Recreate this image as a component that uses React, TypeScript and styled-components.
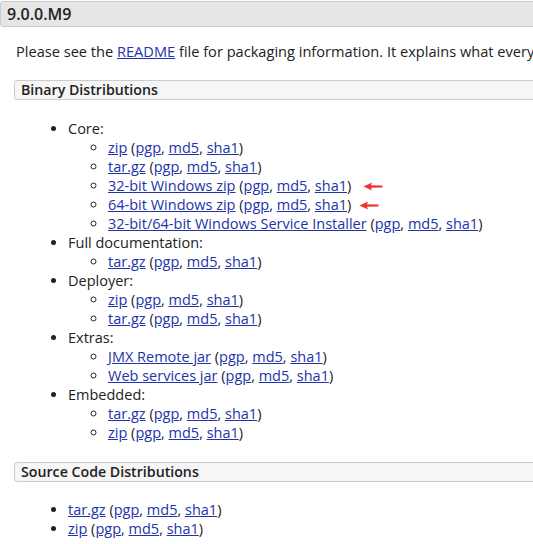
import styled, { createGlobalStyle } from "styled-components";

const GlobalStyle = createGlobalStyle`
    html, body {
        margin: 0;
        padding: 0;
        background: #ffffff;
        overflow: hidden;
    }
    body {
        font-family: "Open Sans", "Noto Sans", sans-serif;
        font-size: 14px;
        color: #222222;
        line-height: 19px;
    }
`;

const Page = styled.div`
    width: 533px;
    height: 544px;
    overflow: hidden;
    padding-top: 1px;
    box-sizing: border-box;
`;

const Release = styled.h2`
    margin: 0 -6px 0 0;
    padding: 2px 6px;
    font-size: 16px;
    font-weight: 600;
    line-height: 20px;
    background: #e6e6e6;
    border: 1px solid #cccccc;
    border-radius: 3px;
`;

const Intro = styled.p`
    margin: 15px 0 0 16px;
    font-size: 14.6px;
    white-space: nowrap;
`;

const SectionTitle = styled.h3<{ $top: number }>`
    margin: ${(p) => p.$top}px -10px 0 14px;
    padding: 0 6px;
    font-size: 14.2px;
    font-weight: 600;
    line-height: 18px;
    background: #f6f6f6;
    border: 1px solid #cccccc;
    border-radius: 3px;
`;

const List = styled.ul<{ $top: number }>`
    margin: ${(p) => p.$top}px 0 0 0;
    padding-left: 68px;
    list-style: disc;
    font-size: 14.5px;
`;

const SubList = styled.ul`
    margin: 0;
    padding-left: 40px;
    list-style: circle;
`;

const Item = styled.li`
    white-space: nowrap;
`;

const A = styled.a`
    color: #2233aa;
    text-decoration: underline;
`;

const Arrow = styled.svg`
    display: inline-block;
    vertical-align: middle;
    margin-top: -2px;
`;

const RedArrow = ({ shift }: { shift: number }) => (
    <Arrow width="20" height="9" viewBox="0 0 20 9" style={{ marginLeft: shift }}>
        <path d="M0.5 4.5 L9 0.5 L8 3.2 L19.5 3.6 L19.5 5.4 L8 5.8 L9 8.5 Z" fill="#ee3333" />
    </Arrow>
);

const Sums = () => (
    <>
        {" ("}
        <A href="#">pgp</A>, <A href="#">md5</A>, <A href="#">sha1</A>)
    </>
);

const Dl = ({ name, arrow }: { name: string; arrow?: number }) => (
    <Item>
        <A href="#">{name}</A>
        <Sums />
        {arrow !== undefined && <RedArrow shift={arrow} />}
    </Item>
);

const App = () => {
    return (
        <Page>
            <GlobalStyle />
            <Release>9.0.0.M9</Release>
            <Intro>
                Please see the <A href="#">README</A> file for packaging information. It
                explains what every distribution contains.
            </Intro>
            <SectionTitle $top={19}>Binary Distributions</SectionTitle>
            <List $top={19}>
                <Item>
                    Core:
                    <SubList>
                        <Dl name="zip" />
                        <Dl name="tar.gz" />
                        <Dl name="32-bit Windows zip" arrow={12} />
                        <Dl name="64-bit Windows zip" arrow={8} />
                        <Dl name="32-bit/64-bit Windows Service Installer" />
                    </SubList>
                </Item>
                <Item>
                    Full documentation:
                    <SubList>
                        <Dl name="tar.gz" />
                    </SubList>
                </Item>
                <Item>
                    Deployer:
                    <SubList>
                        <Dl name="zip" />
                        <Dl name="tar.gz" />
                    </SubList>
                </Item>
                <Item>
                    Extras:
                    <SubList>
                        <Dl name="JMX Remote jar" />
                        <Dl name="Web services jar" />
                    </SubList>
                </Item>
                <Item>
                    Embedded:
                    <SubList>
                        <Dl name="tar.gz" />
                        <Dl name="zip" />
                    </SubList>
                </Item>
            </List>
            <SectionTitle $top={20}>Source Code Distributions</SectionTitle>
            <List $top={18}>
                <Dl name="tar.gz" />
                <Dl name="zip" />
            </List>
        </Page>
    );
};

export default App;
